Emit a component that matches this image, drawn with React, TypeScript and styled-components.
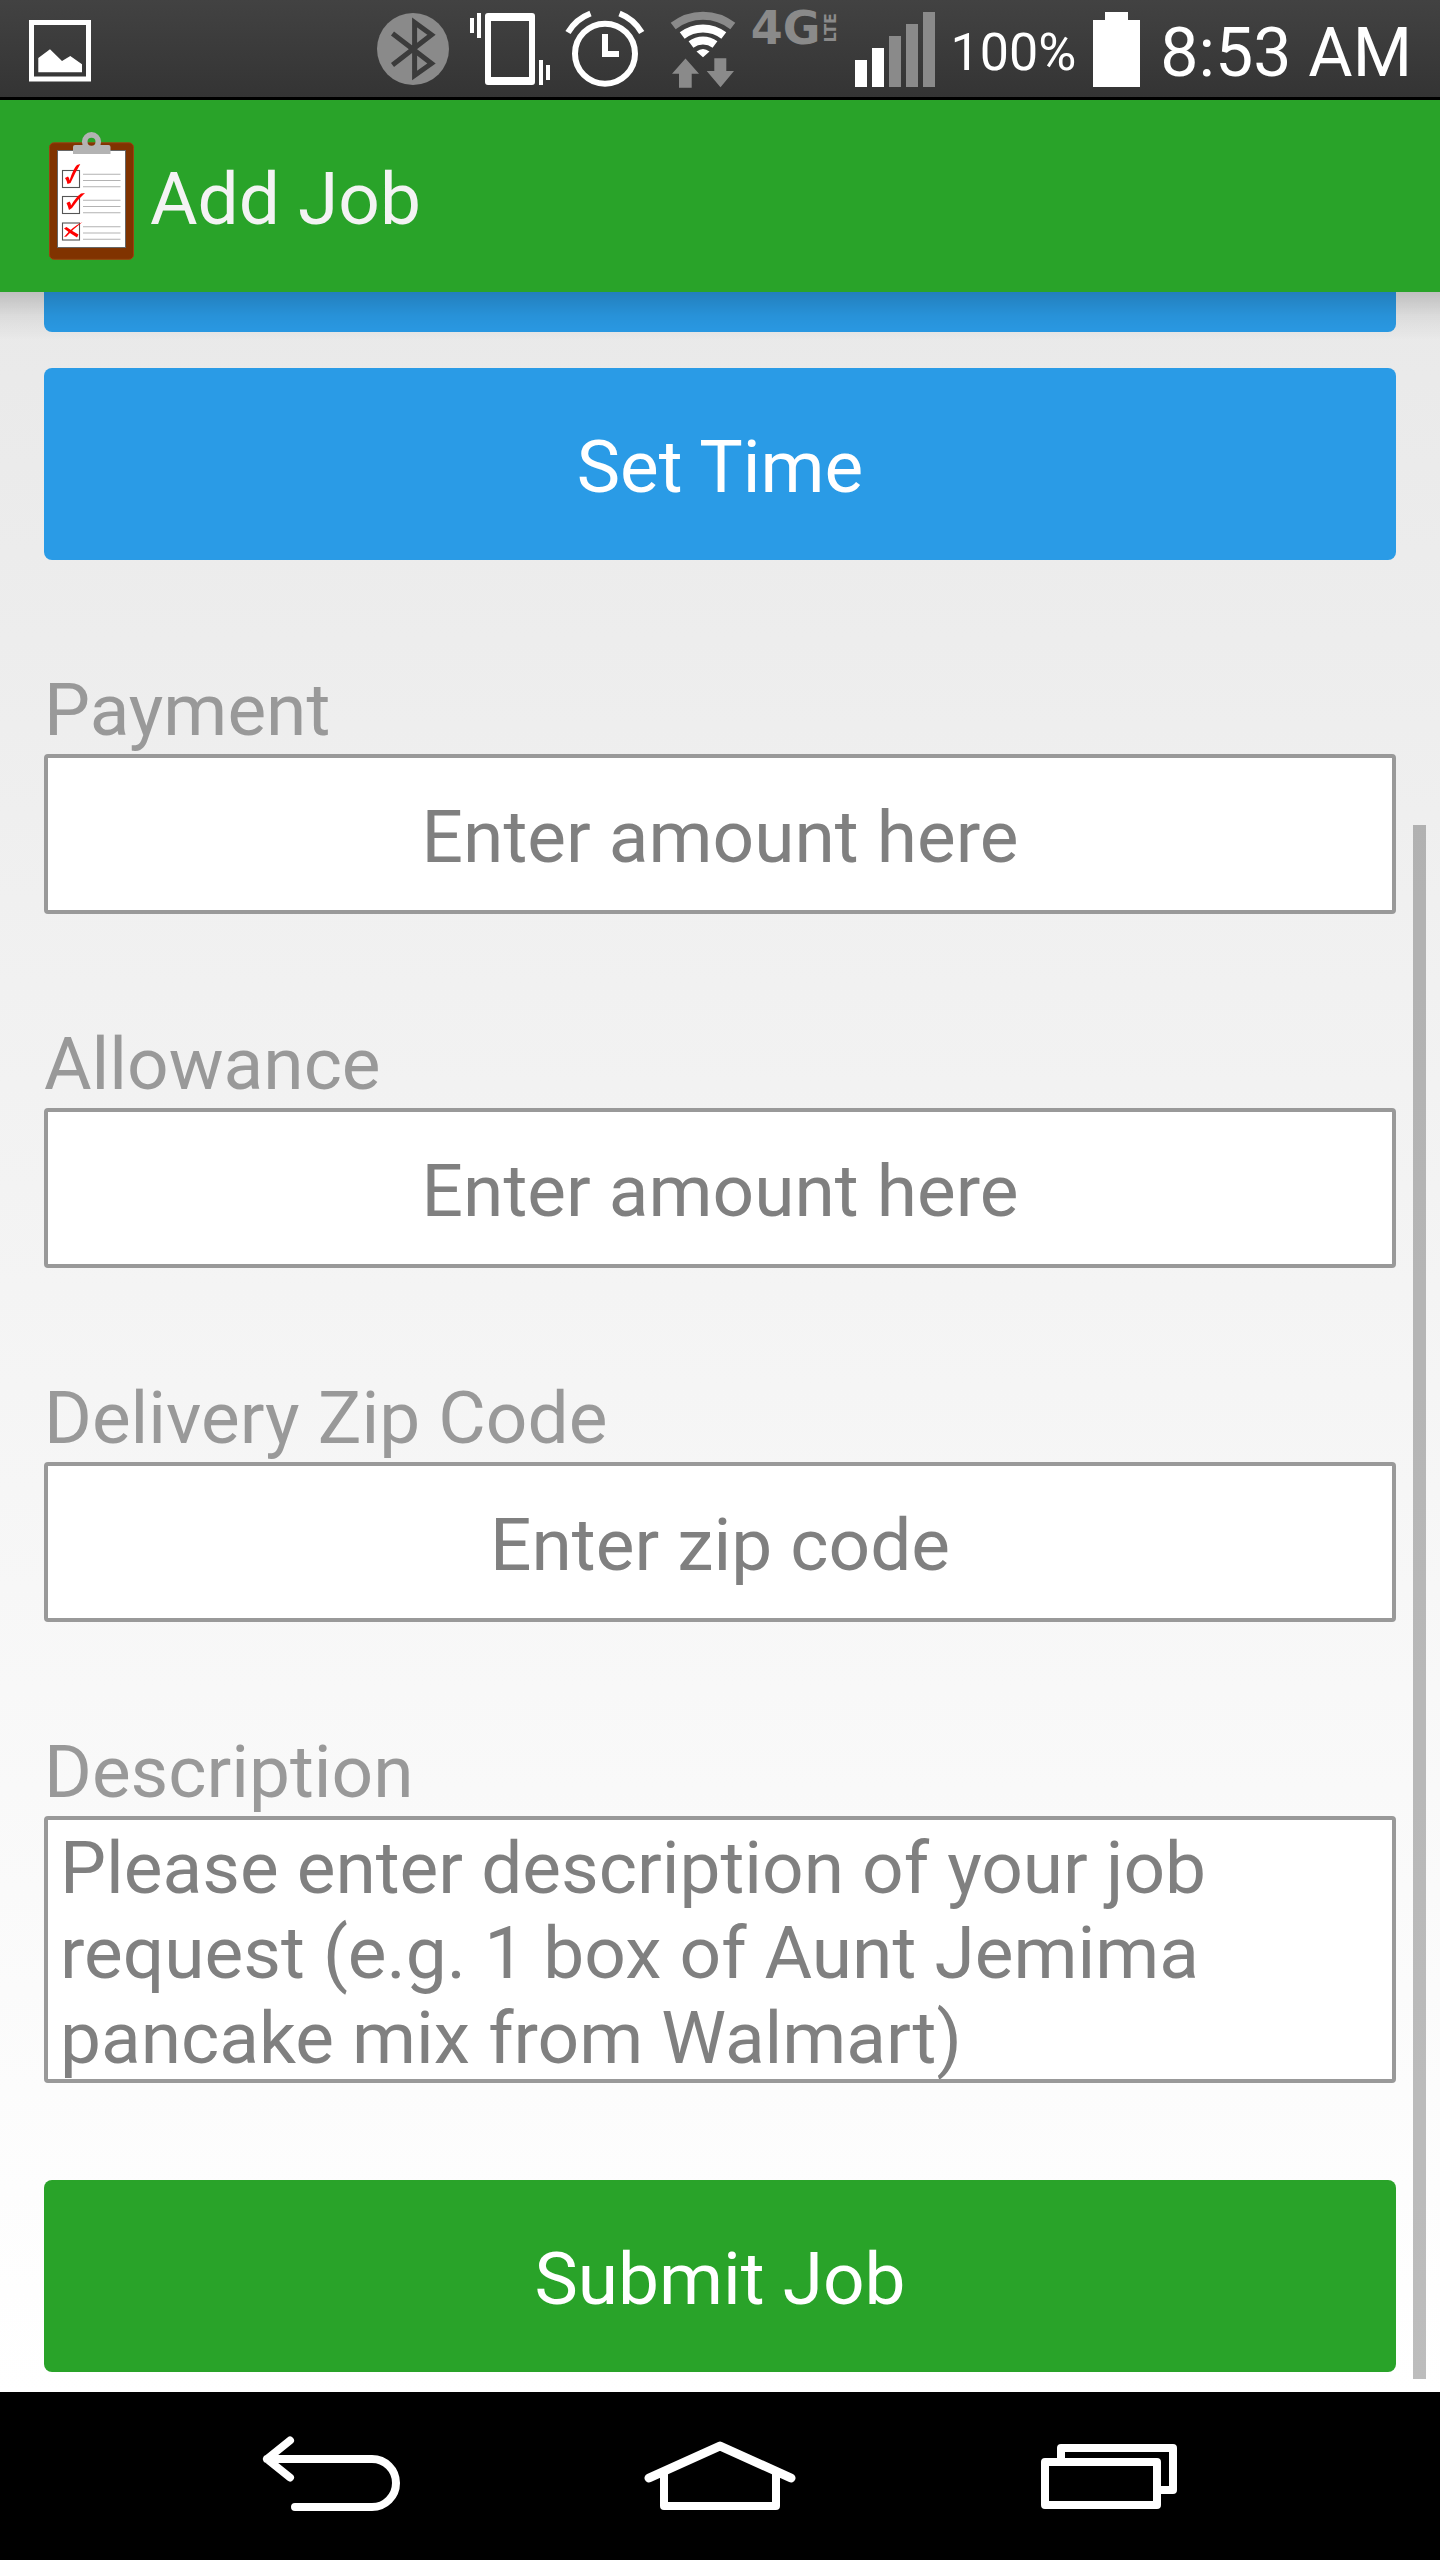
import React, { useLayoutEffect, useRef } from 'react';
import styled, { createGlobalStyle } from 'styled-components';

const colors = {
  green: '#29a329',
  blue: '#2a9be6',
  label: '#999999',
  hint: '#808080',
  dim: '#8a8a8a',
};

const GlobalStyle = createGlobalStyle`
  *, *::before, *::after {
    box-sizing: border-box;
  }
  body {
    margin: 0;
    background: #000;
    font-family: Roboto, 'Liberation Sans', sans-serif;
  }
`;

const Screen = styled.div`
  display: flex;
  flex-direction: column;
  height: 100vh;
  overflow: hidden;
`;

const StatusBar = styled.div`
  display: flex;
  flex: none;
  align-items: center;
  justify-content: space-between;
  height: 100px;
  padding: 0 28px;
  border-bottom: 3px solid #000;
  background: linear-gradient(#424242, #343434);
  color: #fff;
`;

const StatusGroup = styled.div`
  display: flex;
  align-items: center;
  gap: 14px;
`;

const Glyph = styled.svg`
  display: block;
  flex: none;
`;

const Network = styled.span`
  display: flex;
  align-items: center;
  align-self: flex-start;
  height: 56px;
  gap: 2px;
  color: ${colors.dim};
  font-family: 'DejaVu Sans', sans-serif;
  font-size: 46px;
  font-weight: 700;
  line-height: 48px;
`;

const NetworkType = styled.span`
  font-size: 16px;
  line-height: 16px;
  writing-mode: vertical-rl;
  transform: rotate(180deg);
`;

const StatusText = styled.span<{ $size: number }>`
  padding-top: 8px;
  font-size: ${(p) => p.$size}px;
  line-height: 80px;
  white-space: nowrap;
`;

const ActionBar = styled.header`
  display: flex;
  flex: none;
  align-items: center;
  gap: 14px;
  height: 192px;
  padding: 0 48px;
  background: ${colors.green};
`;

const Title = styled.h1`
  margin: 0;
  padding-top: 6px;
  color: #f3f3f3;
  font-size: 73px;
  font-weight: 400;
  line-height: 85px;
`;

const Body = styled.div`
  position: relative;
  flex: 1;
  min-height: 0;
  background: linear-gradient(#e9e9e9, #f1f1f1 33%, #ffffff);

  &::before {
    content: '';
    position: absolute;
    z-index: 1;
    inset: 0 0 auto;
    height: 48px;
    background: linear-gradient(rgba(0, 0, 0, 0.18), rgba(0, 0, 0, 0.06) 50%, rgba(0, 0, 0, 0));
    pointer-events: none;
  }
`;

const Scroller = styled.main`
  height: 100%;
  overflow-y: auto;
  scrollbar-width: none;
`;

const ScrollThumb = styled.div`
  position: absolute;
  top: 533px;
  right: 14px;
  bottom: 13px;
  width: 13px;
  background: rgba(0, 0, 0, 0.26);
`;

const Form = styled.form`
  display: flex;
  flex-direction: column;
  padding: 20px 44px;
`;

const ButtonStack = styled.div`
  display: flex;
  flex-direction: column;
  gap: 36px;
`;

const FormButton = styled.button<{ $tone: 'blue' | 'green' }>`
  width: 100%;
  height: 192px;
  padding: 6px 0 0;
  border: 0;
  border-radius: 8px;
  background: ${(p) => colors[p.$tone]};
  color: #fff;
  font: inherit;
  font-size: 73px;
  line-height: 85px;
`;

const Field = styled.div`
  display: flex;
  flex-direction: column;
  margin-top: 106px;
`;

const Label = styled.label`
  color: ${colors.label};
  font-size: 73px;
  line-height: 88px;
`;

const TextBox = styled.input`
  width: 100%;
  height: 160px;
  padding: 6px 12px 0;
  border: 4px solid ${colors.label};
  border-radius: 4px;
  background: #fff;
  color: #222;
  font: inherit;
  font-size: 73px;
  line-height: 85px;
  text-align: center;

  &::placeholder {
    color: ${colors.hint};
    opacity: 1;
  }
`;

const TextArea = styled.textarea`
  display: block;
  width: 100%;
  height: 267px;
  margin-bottom: 97px;
  padding: 6px 12px 0;
  border: 4px solid ${colors.label};
  border-radius: 4px;
  background: #fff;
  color: #222;
  font: inherit;
  font-size: 73px;
  line-height: 85px;
  overflow: hidden;
  resize: none;

  &::placeholder {
    color: ${colors.hint};
    opacity: 1;
  }
`;

const NavBar = styled.nav`
  display: flex;
  flex: none;
  justify-content: center;
  gap: 230px;
  height: 168px;
  background: #000;
`;

const NavButton = styled.button`
  width: 160px;
  height: 168px;
  padding: 0;
  border: 0;
  background: none;
  color: #fff;
`;

const PictureIcon = () => (
  <Glyph width="64" height="97" viewBox="28 0 64 97" aria-hidden="true">
    <rect x="31.5" y="22.5" width="57" height="56.5" fill="none" stroke="#fff" strokeWidth="5" />
    <path d="M38.3 58 50 49.3 62 61 70.3 56 82 64.3V72.3H38.3Z" fill="#fff" />
  </Glyph>
);

const BluetoothIcon = () => (
  <Glyph width="78" height="97" viewBox="378 0 78 97" aria-hidden="true">
    <circle cx="414" cy="49" r="36" fill={colors.dim} />
    <path
      d="M393.5 33.500 432.500 63.500 415.600 75.500V22.500L432.500 34.800 393.500 65"
      fill="none"
      stroke="#3b3b3b"
      strokeWidth="5"
    />
  </Glyph>
);

const VibrateIcon = () => (
  <Glyph width="82" height="97" viewBox="470 0 82 97" aria-hidden="true" fill="#fff">
    <rect x="471" y="18" width="4" height="15" />
    <rect x="478" y="13" width="4" height="25" />
    <path
      fillRule="evenodd"
      d="M489 13h44a3 3 0 0 1 3 3v66a3 3 0 0 1-3 3h-44a3 3 0 0 1-3-3V16a3 3 0 0 1 3-3ZM492 21v56h38V21Z"
    />
    <rect x="540" y="60" width="4" height="25" />
    <rect x="547" y="65" width="4" height="15" />
  </Glyph>
);

const AlarmIcon = () => (
  <Glyph width="84" height="97" viewBox="566 0 84 97" aria-hidden="true" fill="none" stroke="#fff" strokeWidth="6">
    <circle cx="606" cy="53.7" r="30" />
    <path d="M606 34V54H620" />
    <path d="M569 32.5A44 44 0 0 1 591.5 13.5M642.7 32.5A44 44 0 0 0 620.5 13.5" />
  </Glyph>
);

const WifiIcon = () => (
  <Glyph width="74" height="97" viewBox="664 0 74 97" aria-hidden="true" fill="none" strokeWidth="8">
    <path d="M674.2 26A48 48 0 0 1 733.8 26" stroke={colors.dim} />
    <path d="M683.2 35.5A34 34 0 0 1 724.8 35.5M692 44.5A20 20 0 0 1 716 44.5" stroke="#fff" />
    <path d="M697.5 51.5Q704 46.5 710.5 51.5L704 57.3Z" fill="#fff" />
    <path
      d="M686.5 58.5 700 73.7H692.7V87.7H680V73.7H673ZM715.3 58.3H727.3V71H735L721.5 87.3 707.7 71H715.3Z"
      fill={colors.dim}
    />
  </Glyph>
);

const SignalIcon = () => (
  <Glyph width="84" height="97" viewBox="854 0 84 97" aria-hidden="true">
    {[0, 1, 2, 3, 4].map((i) => (
      <rect
        key={i}
        x={856 + i * 17}
        y={60 - i * 12}
        width="12"
        height={27 + i * 12}
        fill={i < 2 ? '#fff' : colors.dim}
      />
    ))}
  </Glyph>
);

const BatteryIcon = () => (
  <Glyph width="56" height="97" viewBox="1089 0 56 97" aria-hidden="true">
    <path d="M1104 12h23v8h12v67h-47V20h12Z" fill="#fff" />
  </Glyph>
);

const ClipboardIcon = () => (
  <Glyph width="88" height="130" viewBox="48 131 88 130" aria-hidden="true">
    <rect x="49.5" y="142.8" width="84" height="116.5" rx="4.5" fill="#803300" stroke="#9c4210" strokeWidth="1" />
    <rect x="57.5" y="150.5" width="68" height="97" fill="#fff" stroke="#666" strokeWidth="1" />
    <circle cx="91.5" cy="141.7" r="6.8" fill="none" stroke="#b3b3b3" strokeWidth="5.6" />
    <path d="M75 145h12a5 4 0 0 0 9 0h12.5a2 2 0 0 1 2 2v7H73v-7a2 2 0 0 1 2-2Z" fill="#b3b3b3" />
    {[170.5, 196.5, 223].map((y) => (
      <g key={y} fill="none">
        <rect x="62.5" y={y} width="17" height="17" stroke="#555" strokeWidth="1.1" />
        <path d={`M83 ${y + 3.8}h37.5m-37.5 6.2h37.5m-37.5 6.2h37.5`} stroke="#b3b3b3" strokeWidth="1.1" />
      </g>
    ))}
    <g fill="#f00">
      <path d="M65 178 68 176.5Q69.5 178 69.5 180.5 73.5 168 77 165L80.3 164Q75 173 70.5 183L67.5 184Q66.5 180 65 178Z" />
      <path d="M66.5 203 69.5 201.5Q71 203 71 205.5 76 197 81 193.5L85 193Q78 199 72 208L69 210Q68 206 66.5 203Z" />
      <path d="M64 228.5 66.5 227Q72 231 78.5 234.5L77 237.5Q70 233.5 64 228.5Z" />
      <path d="M64 237Q72 227 82.5 222 73 229 66.5 236.5Z" />
    </g>
  </Glyph>
);

const BackIcon = () => (
  <Glyph width="160" height="168" viewBox="250 2392 160 168" aria-hidden="true">
    <path
      d="M290 2440.5 267 2459 290 2477.5M267 2459H372A24 24 0 0 1 372 2507H295"
      fill="none"
      stroke="#fff"
      strokeWidth="8"
      strokeLinecap="round"
      strokeLinejoin="round"
    />
  </Glyph>
);

const HomeIcon = () => (
  <Glyph width="160" height="168" viewBox="640 2392 160 168" aria-hidden="true">
    <g fill="none" stroke="#fff" strokeWidth="8" strokeLinecap="round" strokeLinejoin="round">
      <path d="M649 2478 720 2446 791 2478" strokeWidth="9" />
      <path d="M664 2474V2506H776V2474" />
    </g>
  </Glyph>
);

const RecentsIcon = () => (
  <Glyph width="160" height="168" viewBox="1030 2392 160 168" aria-hidden="true">
    <g fill="#000" stroke="#fff" strokeWidth="8" strokeLinejoin="round">
      <rect x="1061" y="2448" width="112" height="42" />
      <rect x="1045" y="2462" width="112" height="43" />
    </g>
  </Glyph>
);

const inputs = [
  { id: 'payment', label: 'Payment', hint: 'Enter amount here' },
  { id: 'allowance', label: 'Allowance', hint: 'Enter amount here' },
  { id: 'zip', label: 'Delivery Zip Code', hint: 'Enter zip code' },
];

export default function App() {
  const scroller = useRef<HTMLElement>(null);

  // The form opens scrolled down to its submit button.
  useLayoutEffect(() => {
    const el = scroller.current;
    if (el) el.scrollTop = el.scrollHeight;
  }, []);

  return (
    <>
      <GlobalStyle />
      <Screen>
        <StatusBar>
          <PictureIcon />
          <StatusGroup>
            <BluetoothIcon />
            <VibrateIcon />
            <AlarmIcon />
            <WifiIcon />
            <Network>
              4G<NetworkType>LTE</NetworkType>
            </Network>
            <SignalIcon />
            <StatusText $size={52}>100%</StatusText>
            <BatteryIcon />
            <StatusText $size={68}>8:53 AM</StatusText>
          </StatusGroup>
        </StatusBar>
        <ActionBar>
          <ClipboardIcon />
          <Title>Add Job</Title>
        </ActionBar>
        <Body>
          <Scroller ref={scroller}>
            <Form onSubmit={(e) => e.preventDefault()}>
              <ButtonStack>
                <FormButton type="button" $tone="blue" aria-label="Set Date" />
                <FormButton type="button" $tone="blue">
                  Set Time
                </FormButton>
              </ButtonStack>
              {inputs.map((f) => (
                <Field key={f.id}>
                  <Label htmlFor={f.id}>{f.label}</Label>
                  <TextBox id={f.id} type="text" placeholder={f.hint} />
                </Field>
              ))}
              <Field>
                <Label htmlFor="description">Description</Label>
                <TextArea
                  id="description"
                  placeholder="Please enter description of your job request (e.g. 1 box of Aunt Jemima pancake mix from Walmart)"
                />
              </Field>
              <FormButton type="submit" $tone="green">
                Submit Job
              </FormButton>
            </Form>
          </Scroller>
          <ScrollThumb />
        </Body>
        <NavBar>
          <NavButton type="button" aria-label="Back">
            <BackIcon />
          </NavButton>
          <NavButton type="button" aria-label="Home">
            <HomeIcon />
          </NavButton>
          <NavButton type="button" aria-label="Recent apps">
            <RecentsIcon />
          </NavButton>
        </NavBar>
      </Screen>
    </>
  );
}
